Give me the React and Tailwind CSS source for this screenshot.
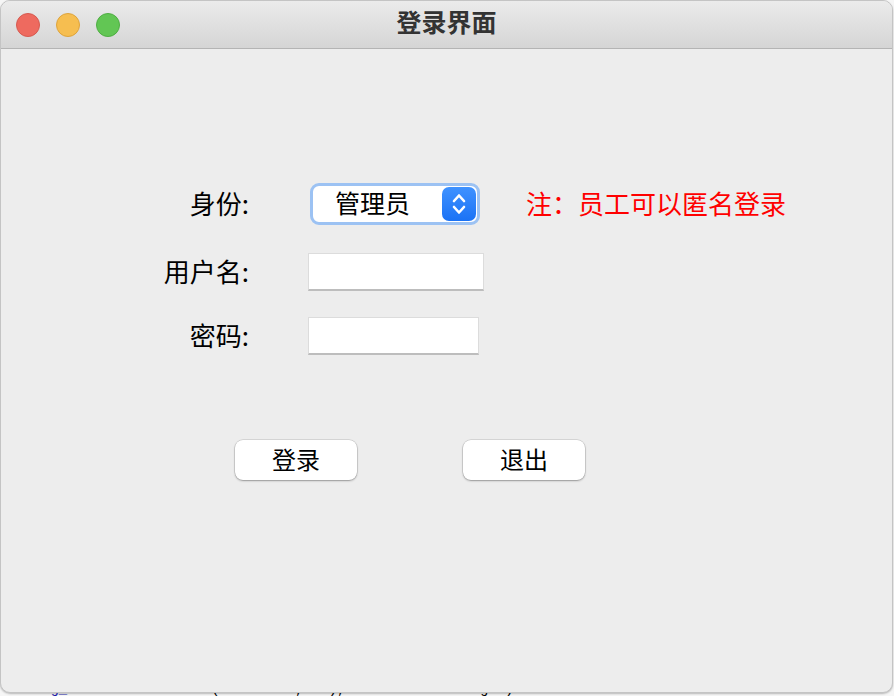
import React from "react";

const cjk = { fontFamily: '"Noto Sans CJK SC", "Noto Sans", sans-serif' };

function Light({ bg, border }) {
  return <div className={`w-[24px] h-[24px] rounded-full ${bg} ${border} border`} />;
}

export default function App() {
  return (
    <div className="w-[894px] h-[696px] bg-[#f6f6f6] overflow-hidden" style={cjk}>
      <div className="w-[893px] h-[693px] rounded-[10px] bg-[#ededed] border border-[#c4c4c4] overflow-hidden flex flex-col shadow-[0_1px_2px_rgba(0,0,0,0.25)]">
        {/* title bar */}
        <div className="relative h-[48px] shrink-0 bg-gradient-to-b from-[#ebebeb] to-[#d5d5d5] border-b border-[#b4b4b4] flex items-center">
          <div className="flex items-center gap-[16px] pl-[15px]">
            <Light bg="bg-[#ee6a5f]" border="border-[#d65a50]" />
            <Light bg="bg-[#f6be50]" border="border-[#dea43c]" />
            <Light bg="bg-[#62c654]" border="border-[#4fae43]" />
          </div>
          <div className="absolute inset-0 flex items-center justify-center text-[25px] font-bold text-[#333333] pb-[6px]">
            登录界面
          </div>
        </div>

        {/* body */}
        <div className="flex flex-col pt-[134px] text-[26px] text-black">
          <div className="flex items-center h-[42px]">
            <div className="w-[250px] text-right pr-[2px] pb-[3px]">身份:</div>
            <div className="ml-[59px] w-[170px] h-[42px] rounded-[9px] border-[3px] border-[#9cc2f3] bg-white flex items-center">
              <div className="flex-1 text-center text-[25px] pr-[10px] pb-[3px]">管理员</div>
              <div className="w-[34px] h-[34px] mr-[1px] rounded-[7px] bg-gradient-to-b from-[#3f92ff] to-[#1a72f5] flex items-center justify-center">
                <svg width="16" height="28" viewBox="0 0 16 28" fill="none" stroke="white" strokeWidth="2.6" strokeLinecap="round" strokeLinejoin="round">
                  <path d="M3 11 L8 5.5 L13 11" />
                  <path d="M3 17 L8 22.5 L13 17" />
                </svg>
              </div>
            </div>
            <div className="ml-[46px] text-[#ff0000] pb-[3px]">注：员工可以匿名登录</div>
          </div>

          <div className="flex items-center h-[38px] mt-[28px]">
            <div className="w-[250px] text-right pr-[2px] pb-[3px]">用户名:</div>
            <div className="ml-[57px] w-[176px] h-[38px] bg-white border-t border-x border-[#dcdcdc] border-b-2 border-b-[#bdbdbd]" />
          </div>

          <div className="flex items-center h-[38px] mt-[26px]">
            <div className="w-[250px] text-right pr-[2px] pb-[3px]">密码:</div>
            <div className="ml-[57px] w-[171px] h-[38px] bg-white border-t border-x border-[#dcdcdc] border-b-2 border-b-[#bdbdbd]" />
          </div>

          <div className="flex items-center mt-[85px] text-[24px]">
            <button className="ml-[234px] w-[122px] h-[40px] rounded-[8px] bg-white shadow-[0_0_0_0.5px_rgba(0,0,0,0.18),0_1px_2px_rgba(0,0,0,0.3)] flex items-center justify-center pb-[3px]">
              登录
            </button>
            <button className="ml-[106px] w-[122px] h-[40px] rounded-[8px] bg-white shadow-[0_0_0_0.5px_rgba(0,0,0,0.18),0_1px_2px_rgba(0,0,0,0.3)] flex items-center justify-center pb-[3px]">
              退出
            </button>
          </div>
        </div>
      </div>
      <div className="h-[3px] overflow-hidden">
        <div className="-mt-[11px] text-[14px] leading-[14px] whitespace-nowrap" style={{ fontFamily: '"Liberation Mono", monospace' }}>
          <span className="text-[#1a1aa6]">self.bg_label</span>
          <span className="ml-[60px] text-[#7a1a4a]">font</span>
          <span className="text-black">=(Helvetica, 18), command=self.login)</span>
        </div>
      </div>
    </div>
  );
}
